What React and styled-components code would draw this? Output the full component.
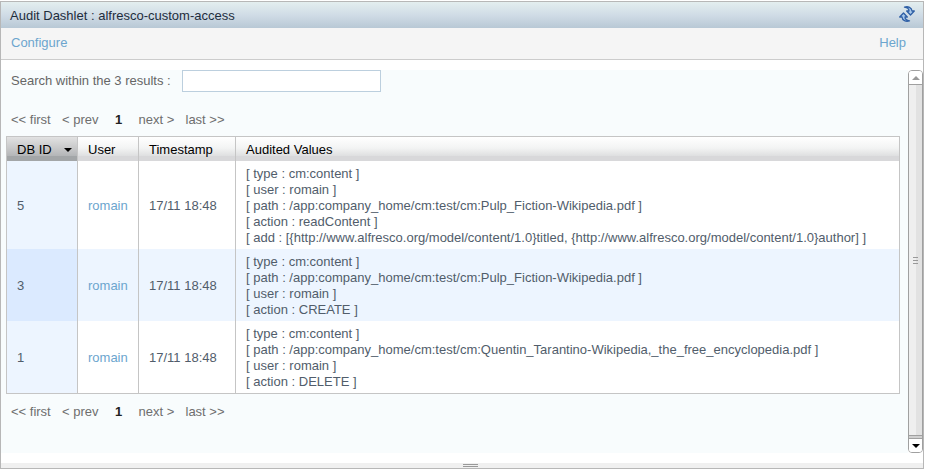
import React, { useState } from "react";
import styled, { createGlobalStyle, css } from "styled-components";

const GlobalStyle = createGlobalStyle`
  *, *::before, *::after { box-sizing: border-box; }
  body {
    margin: 0;
    background: #fff;
    color: #515d6b;
    font: 13px/16px "Liberation Sans", Arial, sans-serif;
  }
  button, input { font: inherit; color: inherit; }
`;

const Dashlet = styled.section`
  display: flex;
  flex-direction: column;
  min-height: calc(100vh - 2px);
  margin: 1px 1px 1px 0;
  border: 1px solid #b7b7b7;
`;

const TitleBar = styled.header`
  display: flex;
  align-items: center;
  justify-content: space-between;
  height: 26px;
  padding: 0 8px 0 9px;
  background: linear-gradient(#e3eeef, #d0dce6 50%, #b8c8d5);
`;

const Title = styled.h1`
  margin: 0;
  padding-top: 2px;
  font-size: 13px;
  font-weight: normal;
  color: #1e2d3d;
`;

const IconButton = styled.button`
  display: flex;
  padding: 0 0 2px;
  border: 0;
  background: none;
  cursor: pointer;
`;

const Toolbar = styled.nav`
  display: flex;
  align-items: center;
  justify-content: space-between;
  height: 32px;
  padding: 0 17px 2px 10px;
  background: #f5f5f5;
  border-bottom: 1px solid #ccc;
`;

const Link = styled.a`
  color: #6ca5ce;
  text-decoration: none;
`;

const Body = styled.div`
  display: flex;
  flex: 1;
  padding: 10px 0;
`;

const Content = styled.main`
  flex: 1;
  min-width: 0;
  padding: 0 8px 0 5px;
  background: #f8fcfd;
`;

const SearchRow = styled.div`
  display: flex;
  align-items: center;
  gap: 11px;
  height: 22px;
  padding-left: 5px;
  color: #666;
`;

const SearchInput = styled.input`
  width: 199px;
  height: 22px;
  padding: 0 4px;
  border: 1px solid #bccfde;
  background: #fff;
  outline: 0;
`;

const Pager = styled.div`
  display: flex;
  gap: 10px;
  padding: ${(p) => (p.$top ? "20px 5px 8px" : "10px 5px 0")};
  color: #6e6e6e;
`;

const PagerItem = styled.span`
  min-width: ${(p) => p.$width}px;
  white-space: nowrap;
`;

const CurrentPage = styled.strong`
  width: 20px;
  text-align: center;
  color: #222;
`;

const Table = styled.table`
  width: 100%;
  table-layout: fixed;
  border-collapse: separate;
  border-spacing: 0;
  border: 1px solid #c5c5c5;
  background: #fff;
`;

const Col = styled.col`
  width: ${(p) => (p.$width ? `${p.$width}px` : "auto")};
`;

const HeadCell = styled.th`
  height: 24px;
  padding: 2px 5px 0 10px;
  text-align: left;
  font-weight: normal;
  white-space: nowrap;
  color: #000;
  background: ${(p) =>
    p.$sorted
      ? "linear-gradient(#e2e2e2, #c8c9ca 45%, #b4b6b8 78%, #a3a6a8 80%)"
      : "linear-gradient(#fff, #f3f4f4 45%, #dfe0e1 78%, #d8d8da 80%)"};
  &:not(:last-child) { border-right: 1px solid #c5c5c5; }
`;

const SortButton = styled.button`
  display: flex;
  align-items: center;
  justify-content: space-between;
  width: 100%;
  padding: 0;
  margin: 0;
  border: 0;
  background: none;
  color: #000;
  cursor: pointer;
`;

const Row = styled.tr`
  background: ${(p) => (p.$odd ? "#edf5ff" : "#fff")};
  & > td:first-child { background: ${(p) => (p.$odd ? "#dbeaff" : "#edf5ff")}; }
`;

const Cell = styled.td`
  padding: 5px 10px 3px;
  vertical-align: middle;
  &:not(:last-child) { border-right: 1px solid #c5c5c5; white-space: nowrap; }
`;

const ScrollBar = styled.div`
  display: flex;
  flex-direction: column;
  width: 15px;
  border: 1px solid #a0a0a0;
  border-radius: 4px;
  overflow: hidden;
`;

const arrowEdge = css`
  ${(p) => (p.$down ? "border-top" : "border-bottom")}: 1px solid #a0a0a0;
`;

const ScrollArrow = styled.button`
  display: flex;
  align-items: center;
  justify-content: center;
  height: 14px;
  padding: 0;
  border: 0;
  ${arrowEdge}
  background: #fff;
`;

const Thumb = styled.div`
  display: flex;
  flex-direction: column;
  align-items: center;
  justify-content: center;
  gap: 2px;
  flex: 1;
  background: linear-gradient(90deg, #efefef 7px, #e2e2e2 7px);
  border-bottom: 1px solid #a0a0a0;
`;

const Track = styled.div`
  height: 2px;
  background: #d0d0d0;
`;

const Resizer = styled.footer`
  display: flex;
  flex-direction: column;
  align-items: center;
  gap: 1px;
  height: 5px;
  padding: 1px 0 0 16px;
  background: #f0f0f0;
`;

const GripLine = styled.span`
  width: ${(p) => p.$width}px;
  height: 1px;
  background: #999;
`;

const RefreshIcon = () => (
  <svg width="16" height="16" viewBox="0 0 16 16" fill="#a9c8ea" stroke="#2f5fa5" strokeWidth="1.3" strokeLinejoin="round">
    <path d="M5.500 1.200C9 0 12.800 1.500 13 5h2.300l-3.800 4-3.800-4H10c0-1.800-1.500-3.300-4.500-3.800z" />
    <path d="M10.500 14.800C7 16 3.200 14.500 3 11H.7l3.800-4 3.800 4H6c0 1.800 1.500 3.300 4.500 3.800z" />
  </svg>
);

const Arrow = ({ down, color }) => (
  <svg width="8" height="4" viewBox="0 0 8 4" fill={color} aria-hidden="true">
    <path d={down ? "M0 0h8L4 4z" : "M0 4h8L4 0z"} />
  </svg>
);

const records = [
  {
    id: 5,
    values: [
      "[ type : cm:content ]",
      "[ user : romain ]",
      "[ path : /app:company_home/cm:test/cm:Pulp_Fiction-Wikipedia.pdf ]",
      "[ action : readContent ]",
      "[ add : [{http://www.alfresco.org/model/content/1.0}titled, {http://www.alfresco.org/model/content/1.0}author] ]",
    ],
  },
  {
    id: 3,
    values: [
      "[ type : cm:content ]",
      "[ path : /app:company_home/cm:test/cm:Pulp_Fiction-Wikipedia.pdf ]",
      "[ user : romain ]",
      "[ action : CREATE ]",
    ],
  },
  {
    id: 1,
    values: [
      "[ type : cm:content ]",
      "[ path : /app:company_home/cm:test/cm:Quentin_Tarantino-Wikipedia,_the_free_encyclopedia.pdf ]",
      "[ user : romain ]",
      "[ action : DELETE ]",
    ],
  },
];

const Pagination = ({ top }) => (
  <Pager $top={top}>
    <PagerItem $width={41}>&lt;&lt; first</PagerItem>
    <PagerItem $width={35}>&lt; prev</PagerItem>
    <CurrentPage>1</CurrentPage>
    <PagerItem $width={37}>next &gt;</PagerItem>
    <PagerItem $width={41}>last &gt;&gt;</PagerItem>
  </Pager>
);

export default function App() {
  const [query, setQuery] = useState("");
  return (
    <>
      <GlobalStyle />
      <Dashlet>
        <TitleBar>
          <Title>Audit Dashlet : alfresco-custom-access</Title>
          <IconButton type="button" aria-label="Refresh"><RefreshIcon /></IconButton>
        </TitleBar>
        <Toolbar>
          <Link href="#configure">Configure</Link>
          <Link href="#help">Help</Link>
        </Toolbar>
        <Body>
          <Content>
            <SearchRow>
              <label htmlFor="search">Search within the 3 results :</label>
              <SearchInput id="search" type="text" value={query} onChange={(e) => setQuery(e.target.value)} />
            </SearchRow>
            <Pagination top />
            <Table>
              <colgroup>
                <Col $width={71} />
                <Col $width={61} />
                <Col $width={97} />
                <Col />
              </colgroup>
              <thead>
                <tr>
                  <HeadCell $sorted aria-sort="descending">
                    <SortButton type="button">DB ID<Arrow down color="#000" /></SortButton>
                  </HeadCell>
                  <HeadCell>User</HeadCell>
                  <HeadCell>Timestamp</HeadCell>
                  <HeadCell>Audited Values</HeadCell>
                </tr>
              </thead>
              <tbody>
                {records.map((record, i) => (
                  <Row key={record.id} $odd={i % 2 === 1}>
                    <Cell>{record.id}</Cell>
                    <Cell><Link href="#romain">romain</Link></Cell>
                    <Cell>17/11 18:48</Cell>
                    <Cell>
                      {record.values.map((value) => <div key={value}>{value}</div>)}
                    </Cell>
                  </Row>
                ))}
              </tbody>
            </Table>
            <Pagination />
          </Content>
          <ScrollBar>
            <ScrollArrow type="button" aria-label="Scroll up"><Arrow color="#999" /></ScrollArrow>
            <Thumb>
              <GripLine $width={5} />
              <GripLine $width={5} />
              <GripLine $width={5} />
            </Thumb>
            <Track />
            <ScrollArrow type="button" $down aria-label="Scroll down"><Arrow down color="#000" /></ScrollArrow>
          </ScrollBar>
        </Body>
        <Resizer>
          <GripLine $width={15} />
          <GripLine $width={15} />
        </Resizer>
      </Dashlet>
    </>
  );
}
